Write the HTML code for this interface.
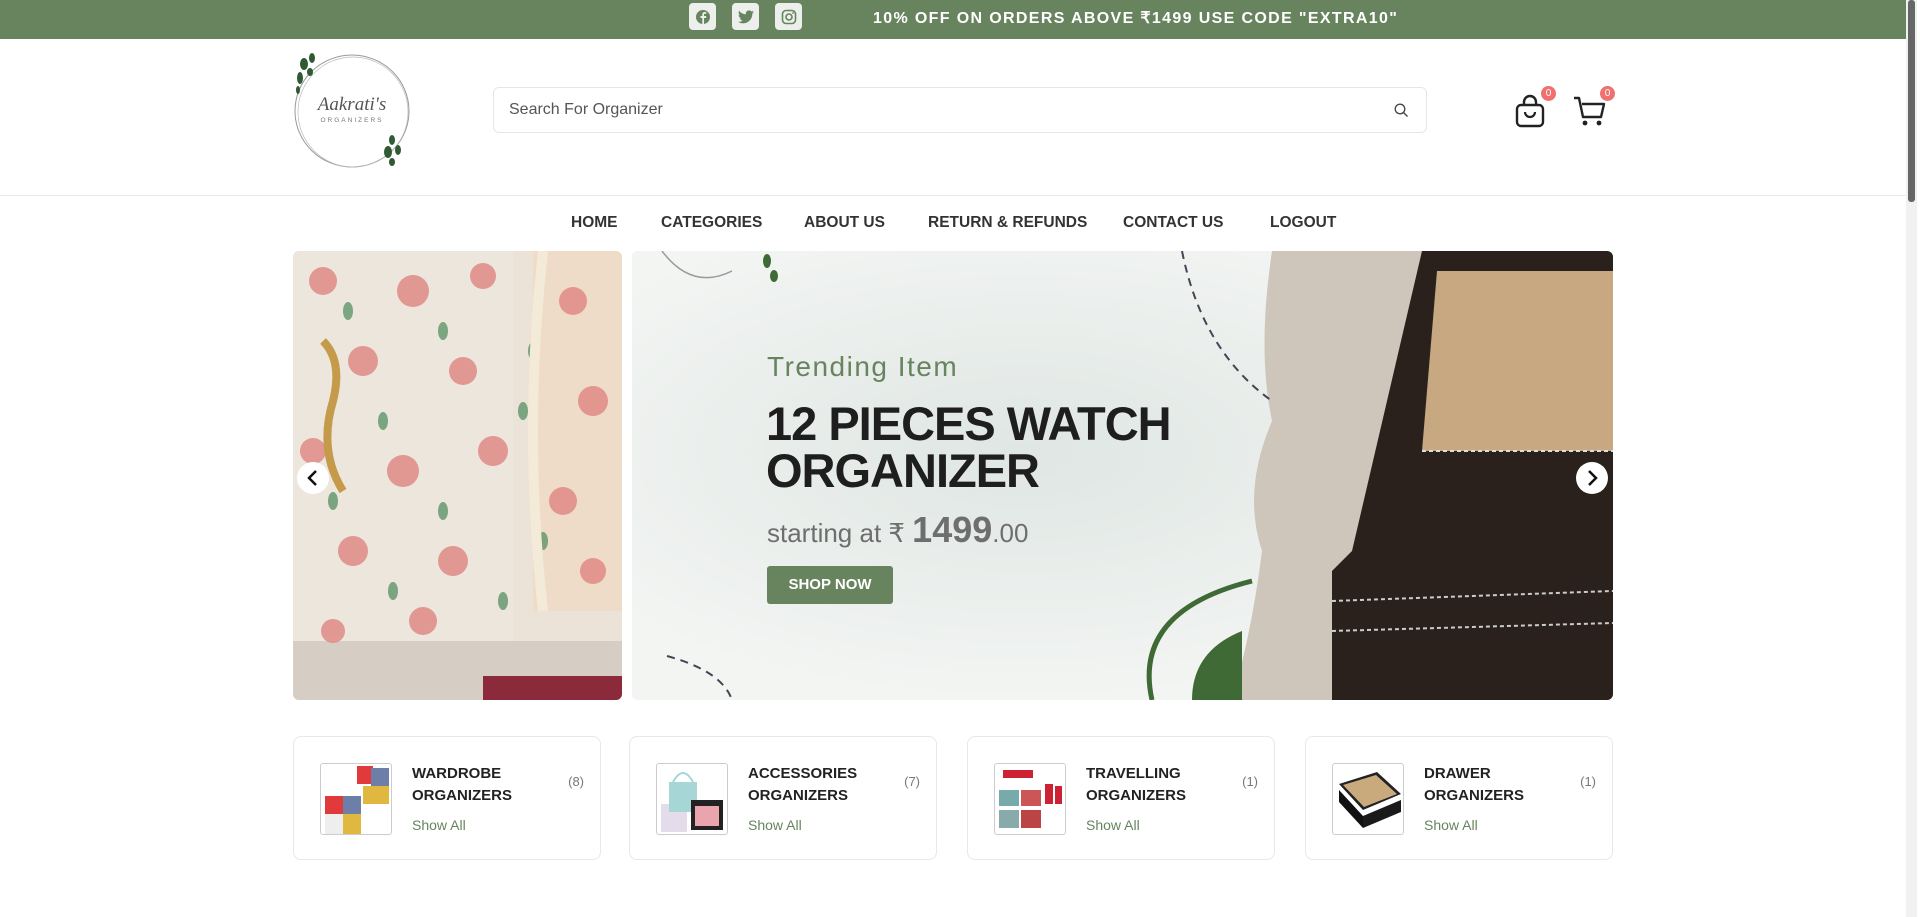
<!DOCTYPE html>
<html><head><meta charset="utf-8"><style>
*{box-sizing:border-box;margin:0;padding:0}
body{width:1920px;height:917px;overflow:hidden;background:#fff;font-family:"Liberation Sans",sans-serif;position:relative}
.abs{position:absolute}
.top{left:0;top:0;width:1906px;height:39px;background:#67845f}
.soc{top:3px;width:27px;height:27px;background:#ecefec;border-radius:4px;display:flex;align-items:center;justify-content:center}
.promo{left:873px;top:8px;color:#fff;font-weight:bold;font-size:16px;letter-spacing:1.35px;white-space:nowrap}
.search{left:493px;top:87px;width:934px;height:46px;border:1px solid #e6e6e6;border-radius:6px;font-size:16px;color:#555;padding:13px 0 0 15px}
.nav a{position:absolute;top:214px;font-size:15.5px;font-weight:bold;color:#333;text-decoration:none;white-space:nowrap}
.badge{width:15px;height:15px;border-radius:50%;background:#f07070;color:#fff;font-size:10px;text-align:center;line-height:15px}
.card{top:736px;width:308px;height:124px;border:1px solid #e8e8e8;border-radius:8px}
.card .im{position:absolute;left:26px;top:26px;width:72px;height:72px;border:1px solid #ccc;border-radius:3px;overflow:hidden;background:#fff}
.card .t{position:absolute;left:118px;top:26px;font-size:15px;font-weight:bold;color:#222;line-height:22px}
.card .s{position:absolute;left:118px;top:80px;font-size:14px;color:#67845f}
.card .c{position:absolute;right:16px;top:37px;font-size:13px;color:#777}
.arrow{width:32px;height:32px;border-radius:50%;background:#fff;display:flex;align-items:center;justify-content:center}
</style></head><body>
<div class="abs top"></div>
<div class="abs soc" style="left:689px"><svg width="16" height="16" viewBox="0 0 16 16"><circle cx="8" cy="8" r="7" fill="#67845f"/><path d="M9 15V9h2l.3-2H9V5.8c0-.6.2-1 1-1h1.3V3.1C11 3 10.4 3 9.8 3 8.3 3 7.3 3.9 7.3 5.5V7H5.5v2h1.8v6z" fill="#ecefec"/></svg></div>
<div class="abs soc" style="left:732px"><svg width="16" height="14" viewBox="0 0 24 20"><path d="M24 2.4a10 10 0 0 1-2.8.8A5 5 0 0 0 23.3.5a10 10 0 0 1-3.1 1.2A4.9 4.9 0 0 0 11.8 6 14 14 0 0 1 1.7.9a4.9 4.9 0 0 0 1.5 6.6 5 5 0 0 1-2.2-.6 4.9 4.9 0 0 0 3.9 4.9 5 5 0 0 1-2.2.1 4.9 4.9 0 0 0 4.6 3.4A9.9 9.9 0 0 1 0 17.3 14 14 0 0 0 7.5 19.5c9 0 14-7.5 14-14v-.6A10 10 0 0 0 24 2.4z" fill="#67845f"/></svg></div>
<div class="abs soc" style="left:775px"><svg width="16" height="16" viewBox="0 0 16 16"><rect x="1.5" y="1.5" width="13" height="13" rx="3.5" fill="none" stroke="#67845f" stroke-width="1.6"/><circle cx="8" cy="8" r="3" fill="none" stroke="#67845f" stroke-width="1.6"/><circle cx="12" cy="4" r=".9" fill="#67845f"/></svg></div>
<div class="abs promo">10% OFF ON ORDERS ABOVE ₹1499 USE CODE "EXTRA10"</div>
<div class="abs" style="left:1906px;top:0;width:11px;height:917px;background:#f1f1f1"></div>
<div class="abs" style="left:1908px;top:0;width:7px;height:202px;background:#666;border-radius:3px"></div>

<svg class="abs" style="left:292px;top:52px" width="120" height="118" viewBox="0 0 120 118">
<ellipse cx="60" cy="59" rx="57" ry="56" fill="none" stroke="#999" stroke-width="1"/>
<ellipse cx="61" cy="60" rx="55" ry="55" fill="none" stroke="#bbb" stroke-width=".7"/>
<g fill="#2f5a34"><ellipse cx="12" cy="12" rx="4" ry="6"/><ellipse cx="20" cy="6" rx="3" ry="5"/><ellipse cx="8" cy="26" rx="3" ry="6"/><ellipse cx="18" cy="20" rx="3" ry="4"/><ellipse cx="6" cy="38" rx="2" ry="4"/>
<ellipse cx="100" cy="88" rx="3" ry="5"/><ellipse cx="96" cy="100" rx="4" ry="6"/><ellipse cx="106" cy="98" rx="3" ry="5"/><ellipse cx="100" cy="110" rx="3" ry="4"/></g>
<text x="60" y="58" font-family="Liberation Serif,serif" font-style="italic" font-size="19" fill="#555" text-anchor="middle">Aakrati's</text>
<text x="60" y="70" font-size="6.5" fill="#777" letter-spacing="2" text-anchor="middle">ORGANIZERS</text>
</svg>

<div class="abs search">Search For Organizer</div>
<svg class="abs" style="left:1394px;top:103px" width="15" height="15" viewBox="0 0 15 15"><circle cx="6" cy="6" r="4.8" fill="none" stroke="#444" stroke-width="1.3"/><path d="M9.5 9.5l4 4" stroke="#444" stroke-width="1.3"/></svg>

<svg class="abs" style="left:1514px;top:94px" width="32" height="34" viewBox="0 0 32 34"><rect x="3" y="11" width="26" height="21" rx="4" fill="none" stroke="#222" stroke-width="2.4"/><path d="M10 11V8a6 6 0 0 1 12 0v3" fill="none" stroke="#222" stroke-width="2.4"/><path d="M11 18a5 5 0 0 0 10 0" fill="none" stroke="#222" stroke-width="2.2"/></svg>
<div class="abs badge" style="left:1541px;top:86px">0</div>
<svg class="abs" style="left:1573px;top:96px" width="34" height="32" viewBox="0 0 34 32"><path d="M1 2h5l4 19h18l3-13H9" fill="none" stroke="#222" stroke-width="2.4" stroke-linejoin="round"/><circle cx="12" cy="27" r="2.4" fill="#222"/><circle cx="26" cy="27" r="2.4" fill="#222"/></svg>
<div class="abs badge" style="left:1600px;top:86px">0</div>

<div class="abs" style="left:0;top:195px;width:1906px;height:1px;background:#eaeaea"></div>
<div class="nav">
<a style="left:571px">HOME</a><a style="left:661px">CATEGORIES</a><a style="left:804px">ABOUT US</a><a style="left:928px">RETURN &amp; REFUNDS</a><a style="left:1123px">CONTACT US</a><a style="left:1270px">LOGOUT</a>
</div>

<div class="abs" style="left:293px;top:251px;width:329px;height:449px;border-radius:6px;overflow:hidden;background:#ebe2d8">
<svg width="329" height="449">
<rect x="0" y="0" width="220" height="400" fill="#ece6dc"/>
<rect x="240" y="0" width="89" height="360" fill="#eedcc8"/>
<rect x="0" y="390" width="329" height="60" fill="#d6cec4"/>
<g fill="#e08a86" opacity=".85">
<circle cx="30" cy="30" r="14"/><circle cx="120" cy="40" r="16"/><circle cx="190" cy="25" r="13"/><circle cx="280" cy="50" r="14"/><circle cx="70" cy="110" r="15"/><circle cx="170" cy="120" r="14"/><circle cx="300" cy="150" r="15"/><circle cx="20" cy="200" r="13"/><circle cx="110" cy="220" r="16"/><circle cx="200" cy="200" r="15"/><circle cx="270" cy="250" r="14"/><circle cx="60" cy="300" r="15"/><circle cx="160" cy="310" r="15"/><circle cx="300" cy="320" r="13"/><circle cx="40" cy="380" r="12"/><circle cx="130" cy="370" r="14"/></g>
<g fill="#4b8a5a" opacity=".7"><ellipse cx="55" cy="60" rx="5" ry="9"/><ellipse cx="150" cy="80" rx="5" ry="9"/><ellipse cx="240" cy="100" rx="5" ry="9"/><ellipse cx="90" cy="170" rx="5" ry="9"/><ellipse cx="230" cy="160" rx="5" ry="9"/><ellipse cx="40" cy="250" rx="5" ry="9"/><ellipse cx="150" cy="260" rx="5" ry="9"/><ellipse cx="250" cy="290" rx="5" ry="9"/><ellipse cx="100" cy="340" rx="5" ry="9"/><ellipse cx="210" cy="350" rx="5" ry="9"/></g>
<path d="M30 90 q20 20 10 60 q-15 50 10 90" stroke="#c59a4a" stroke-width="8" fill="none"/>
<path d="M250 0 q-20 180 0 360" stroke="#f3ead8" stroke-width="10" fill="none"/>
<rect x="190" y="425" width="139" height="24" fill="#8a2a3a"/>
</svg></div>

<div class="abs" style="left:632px;top:251px;width:981px;height:449px;border-radius:6px;overflow:hidden;background:#e9eeeb">
<svg class="abs" style="left:0;top:0" width="981" height="449">
<defs><radialGradient id="g" cx="40%" cy="45%" r="55%"><stop offset="0" stop-color="#dfe6e3"/><stop offset="1" stop-color="#f3f5f3"/></radialGradient></defs>
<rect width="981" height="449" fill="url(#g)"/>
<path d="M640 0 L981 0 L981 449 L600 449 Q620 380 630 300 Q610 240 640 170 Q625 100 640 0Z" fill="#cfc6bb"/>
<path d="M790 0 L981 0 L981 449 L700 449 L700 320 L720 300 Z" fill="#2a211d"/>
<path d="M805 20 L981 20 L981 200 L790 200 Z" fill="#c7a880"/>
<path d="M790 200 L981 200" stroke="#ddd" stroke-width="2" stroke-dasharray="4 3"/>
<path d="M700 350 L981 340 M700 380 L981 372" stroke="#ccc" stroke-width="2" stroke-dasharray="4 3"/>
<path d="M550 0 Q570 100 640 150" stroke="#445" stroke-width="2" fill="none" stroke-dasharray="8 6"/>
<path d="M35 405 Q90 420 100 449" stroke="#445" stroke-width="2" fill="none" stroke-dasharray="8 6"/>
<path d="M520 449 Q500 360 620 330" stroke="#3f6a35" stroke-width="5" fill="none"/>
<path d="M560 449 Q560 400 610 380 L610 449Z" fill="#3f6a35"/>
<path d="M30 0 Q60 40 100 20" stroke="#999" stroke-width="1.5" fill="none"/>
<g fill="#3f6a35"><ellipse cx="135" cy="10" rx="4" ry="7"/><ellipse cx="142" cy="25" rx="4" ry="6"/></g>
</svg>
<div class="abs" style="left:135px;top:100px;font-size:28px;color:#67845f;letter-spacing:1.5px">Trending Item</div>
<div class="abs" style="left:134px;top:149px;font-size:47px;font-weight:bold;color:#1e1e1e;line-height:47px;letter-spacing:-1px">12 PIECES WATCH<br>ORGANIZER</div>
<div class="abs" style="left:135px;top:258px;font-size:26px;color:#6e6e6e;white-space:nowrap">starting at ₹ <b style="font-size:36px">1499</b>.00</div>
<div class="abs" style="left:135px;top:315px;width:126px;height:38px;background:#67845f;border-radius:3px;color:#fff;font-weight:bold;font-size:15px;text-align:center;line-height:38px">SHOP NOW</div>
</div>
<div class="abs arrow" style="left:297px;top:462px"><svg width="14" height="16" viewBox="0 0 14 16"><path d="M10 1L3 8l7 7" stroke="#111" stroke-width="2.5" fill="none"/></svg></div>
<div class="abs arrow" style="left:1576px;top:462px"><svg width="14" height="16" viewBox="0 0 14 16"><path d="M4 1l7 7-7 7" stroke="#111" stroke-width="2.5" fill="none"/></svg></div>

<div class="abs card" style="left:293px"><div class="im"><svg width="72" height="72"><rect x="36" y="2" width="16" height="18" fill="#e03a3a"/><rect x="50" y="4" width="18" height="18" fill="#6d7fa8"/><rect x="42" y="22" width="26" height="18" fill="#e0b840"/><rect x="4" y="32" width="18" height="18" fill="#e03a3a"/><rect x="22" y="32" width="18" height="18" fill="#6d7fa8"/><rect x="4" y="50" width="18" height="20" fill="#eee"/><rect x="22" y="50" width="18" height="20" fill="#e0b840"/></svg></div><div class="t">WARDROBE<br>ORGANIZERS</div><div class="s">Show All</div><div class="c">(8)</div></div>
<div class="abs card" style="left:629px"><div class="im"><svg width="72" height="72"><rect x="4" y="40" width="26" height="28" fill="#e4dcea"/><rect x="12" y="18" width="28" height="30" fill="#a7d6d6"/><path d="M16 18 Q26 0 36 18" stroke="#a7d6d6" stroke-width="2" fill="none"/><rect x="34" y="36" width="32" height="30" fill="#222"/><rect x="38" y="42" width="24" height="20" fill="#e9a4ae"/></svg></div><div class="t">ACCESSORIES<br>ORGANIZERS</div><div class="s">Show All</div><div class="c">(7)</div></div>
<div class="abs card" style="left:967px"><div class="im"><svg width="72" height="72"><rect x="8" y="6" width="30" height="8" fill="#c23"/><rect x="4" y="26" width="20" height="16" fill="#7aa" /><rect x="26" y="26" width="20" height="16" fill="#c55"/><rect x="4" y="46" width="20" height="18" fill="#8aa"/><rect x="26" y="46" width="20" height="18" fill="#b44"/><rect x="50" y="20" width="8" height="20" fill="#c23"/><rect x="60" y="22" width="7" height="18" fill="#c23"/></svg></div><div class="t">TRAVELLING<br>ORGANIZERS</div><div class="s">Show All</div><div class="c">(1)</div></div>
<div class="abs card" style="left:1305px"><div class="im"><svg width="72" height="72"><path d="M6 20 L44 8 L68 30 L30 46Z" fill="#222"/><path d="M10 21 L43 11 L64 30 L31 43Z" fill="#c9aa7d"/><path d="M6 26 L30 52 L30 64 L6 38Z" fill="#111"/><path d="M30 52 L68 36 L68 48 L30 64Z" fill="#1a1a1a"/></svg></div><div class="t">DRAWER<br>ORGANIZERS</div><div class="s">Show All</div><div class="c">(1)</div></div>
</body></html>
